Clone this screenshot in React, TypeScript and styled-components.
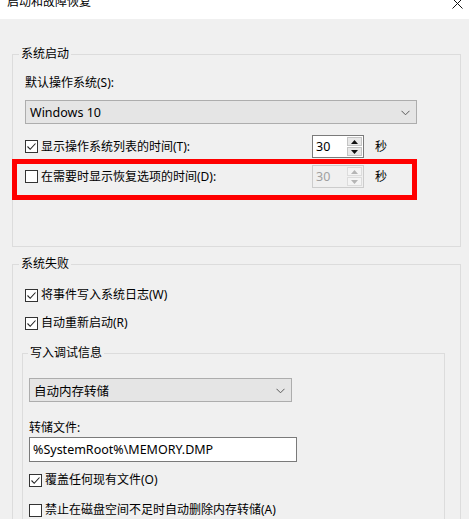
import React from "react";
import styled, { createGlobalStyle } from "styled-components";

const GlobalStyle = createGlobalStyle`
  html, body {
    margin: 0;
    padding: 0;
    background: #f0f0f0;
  }
  body {
    font-family: "Noto Sans", "Noto Sans CJK SC", sans-serif;
    font-size: 12px;
    color: #000;
  }
  * {
    box-sizing: border-box;
  }
`;

function CheckMark() {
  return (
    <svg width="11" height="11" viewBox="0 0 11 11">
      <polyline points="1.5,5.5 4.2,8.3 9.5,2.5" fill="none" stroke="#222" strokeWidth="1.1" />
    </svg>
  );
}

function Chevron() {
  return (
    <svg width="9" height="6" viewBox="0 0 9 6">
      <polyline points="0.5,0.8 4.5,4.8 8.5,0.8" fill="none" stroke="#5a5a5a" strokeWidth="1" />
    </svg>
  );
}

function Arrow({ up, disabled }: { up?: boolean; disabled?: boolean }) {
  return (
    <svg width="7" height="4" viewBox="0 0 7 4">
      <polygon points={up ? "0,4 3.5,0 7,4" : "0,0 3.5,4 7,0"} fill={disabled ? "#b5b5b5" : "#111"} />
    </svg>
  );
}

interface CheckProps {
  checked?: boolean;
  label: string;
}

function Check({ checked, label }: CheckProps) {
  return (
    <CheckLine>
      <Box>{checked && <CheckMark />}</Box>
      <span>{label}</span>
    </CheckLine>
  );
}

function Spinner({ value, disabled }: { value: string; disabled?: boolean }) {
  return (
    <SpinBox $disabled={disabled}>
      <SpinValue $disabled={disabled}>{value}</SpinValue>
      <SpinButtons>
        <SpinButton $disabled={disabled}><Arrow up disabled={disabled} /></SpinButton>
        <SpinButton $disabled={disabled}><Arrow disabled={disabled} /></SpinButton>
      </SpinButtons>
    </SpinBox>
  );
}

export default function App() {
  return (
    <Window>
      <GlobalStyle />
      <TitleBar>
        <Title>启动和故障恢复</Title>
        <svg width="11" height="11" viewBox="0 0 11 11">
          <path d="M0.5 0.5 L10.5 10.5 M10.5 0.5 L0.5 10.5" stroke="#111" strokeWidth="1" />
        </svg>
      </TitleBar>

      <Body>
        <Group>
          <Legend>系统启动</Legend>
          <GroupInner $top={13} $bottom={46}>
            <FieldLabel>默认操作系统(S):</FieldLabel>
            <Select $width={392} $top={9}>
              <span>Windows 10</span>
              <Chevron />
            </Select>
            <SpinRow $top={11}>
              <Check checked label="显示操作系统列表的时间(T):" />
              <Spinner value="30" />
              <Unit>秒</Unit>
            </SpinRow>
            <Highlight>
              <SpinRow>
                <Check label="在需要时显示恢复选项的时间(D):" />
                <Spinner value="30" disabled />
                <Unit>秒</Unit>
              </SpinRow>
            </Highlight>
          </GroupInner>
        </Group>

        <Group>
          <Legend>系统失败</Legend>
          <GroupInner $top={15} $bottom={0}>
            <Check checked label="将事件写入系统日志(W)" />
            <Spaced $top={12}>
              <Check checked label="自动重新启动(R)" />
            </Spaced>
            <SubGroup>
              <SubLegend>写入调试信息</SubLegend>
              <SubInner>
                <Select $width={263} $top={0}>
                  <span>自动内存转储</span>
                  <Chevron />
                </Select>
                <Spaced $top={18}>
                  <FieldLabel>转储文件:</FieldLabel>
                </Spaced>
                <TextInput>%SystemRoot%\MEMORY.DMP</TextInput>
                <Spaced $top={10}>
                  <Check checked label="覆盖任何现有文件(O)" />
                </Spaced>
                <Spaced $top={14}>
                  <Check label="禁止在磁盘空间不足时自动删除内存转储(A)" />
                </Spaced>
              </SubInner>
            </SubGroup>
          </GroupInner>
        </Group>
      </Body>
    </Window>
  );
}

const Window = styled("div")`
  width: 469px;
  height: 519px;
  overflow: hidden;
  background: #f0f0f0;
  display: flex;
  flex-direction: column;
`;

const TitleBar = styled("div")`
  height: 19px;
  flex-shrink: 0;
  background: #fff;
  display: flex;
  justify-content: space-between;
  align-items: flex-start;
  padding: 0 6px 0 7px;
  overflow: hidden;

  svg {
    margin-top: -2px;
  }
`;

const Title = styled("div")`
  font-size: 12px;
  line-height: 12px;
  margin-top: -4px;
`;

const Body = styled("div")`
  display: flex;
  flex-direction: column;
  gap: 9px;
  padding: 27px 8px 0 12px;
`;

const Group = styled("fieldset")`
  margin: 0;
  padding: 0 12px;
  border: 1px solid #dcdcdc;
  min-width: 0;
`;

const Legend = styled("legend")`
  margin-left: -6px;
  padding: 0 2px;
  line-height: 16px;
`;

const GroupInner = styled("div")<{ $top: number; $bottom: number }>`
  display: flex;
  flex-direction: column;
  align-items: flex-start;
  padding: ${({ $top }) => $top}px 0 ${({ $bottom }) => $bottom}px;
`;

const FieldLabel = styled("div")`
  line-height: 16px;
`;

const Spaced = styled("div")<{ $top: number }>`
  margin-top: ${({ $top }) => $top}px;
`;

const Select = styled("div")<{ $width: number; $top: number }>`
  width: ${({ $width }) => $width}px;
  height: 24px;
  margin-top: ${({ $top }) => $top}px;
  background: #e5e5e5;
  border: 1px solid #adadad;
  display: flex;
  align-items: center;
  justify-content: space-between;
  padding: 0 6px 0 4px;
  font-size: 12.5px;

  svg {
    margin-top: 1px;
  }
`;

const CheckLine = styled("div")`
  display: flex;
  align-items: center;
  gap: 3px;
  line-height: 16px;
  white-space: nowrap;
`;

const Box = styled("div")`
  width: 13px;
  height: 13px;
  border: 1px solid #333;
  background: #fff;
  display: flex;
  align-items: center;
  justify-content: center;
  flex-shrink: 0;
`;

const SpinRow = styled("div")<{ $top?: number }>`
  display: grid;
  grid-template-columns: 287px 52px auto;
  column-gap: 0;
  align-items: center;
  margin-top: ${({ $top }) => $top || 0}px;
`;

const Highlight = styled("div")`
  width: 405px;
  margin: 1px 0 0 -13px;
  border: 5px solid #ff0000;
  padding: 1px 0 7px 8px;
`;

const SpinBox = styled("div")<{ $disabled?: boolean }>`
  height: 23px;
  display: flex;
  align-items: center;
  justify-content: space-between;
  border: 1px solid ${({ $disabled }) => ($disabled ? "#cccccc" : "#7a7a7a")};
  background: ${({ $disabled }) => ($disabled ? "#f0f0f0" : "#fff")};
  padding: 0 1px 0 3px;
`;

const SpinValue = styled("span")<{ $disabled?: boolean }>`
  font-size: 12.5px;
  color: ${({ $disabled }) => ($disabled ? "#a0a0a0" : "#000")};
`;

const SpinButtons = styled("div")`
  display: flex;
  flex-direction: column;
  gap: 1px;
  height: 100%;
  padding: 1px 0;
`;

const SpinButton = styled("div")<{ $disabled?: boolean }>`
  width: 15px;
  flex: 1;
  display: flex;
  align-items: center;
  justify-content: center;
  background: ${({ $disabled }) => ($disabled ? "#f4f4f4" : "#e8e8e8")};
  border: 1px solid ${({ $disabled }) => ($disabled ? "#dcdcdc" : "#c4c4c4")};
`;

const Unit = styled("span")`
  margin-left: 11px;
  line-height: 16px;
`;

const SubGroup = styled("fieldset")`
  margin: 14px 0 0 -3px;
  padding: 0 6px;
  border: 1px solid #dcdcdc;
  min-width: 0;
  width: 423px;
  height: 200px;
`;

const SubLegend = styled("legend")`
  margin-left: -1px;
  padding: 0 2px;
  line-height: 16px;
`;

const SubInner = styled("div")`
  display: flex;
  flex-direction: column;
  align-items: flex-start;
  padding-top: 17px;
`;

const TextInput = styled("div")`
  width: 268px;
  height: 25px;
  margin-top: 1px;
  background: #fff;
  border: 1px solid #7a7a7a;
  display: flex;
  align-items: center;
  padding: 0 3px;
  font-size: 12.5px;
`;
